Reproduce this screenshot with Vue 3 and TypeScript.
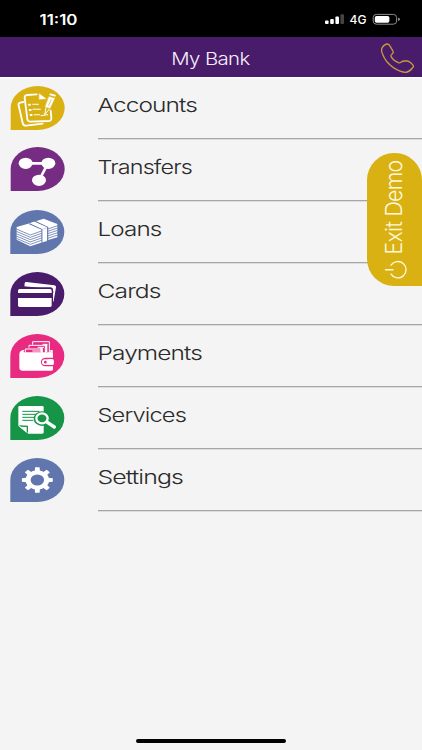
<script setup lang="ts">
interface MenuItem {
  label: string
  icon: string
  color: string
  width: number
}

const items: MenuItem[] = [
  { label: 'Accounts', icon: 'accounts', color: '#d9b112', width: 99.5 },
  { label: 'Transfers', icon: 'transfers', color: '#752c82', width: 94.5 },
  { label: 'Loans', icon: 'loans', color: '#6276ae', width: 64 },
  { label: 'Cards', icon: 'cards', color: '#481b6b', width: 63 },
  { label: 'Payments', icon: 'payments', color: '#e82a80', width: 104.5 },
  { label: 'Services', icon: 'services', color: '#169447', width: 88.5 },
  { label: 'Settings', icon: 'settings', color: '#6276ae', width: 85.5 },
]
const teeth = [0, 45, 90, 135, 180, 225, 270, 315]
</script>

<template>
  <div class="screen">
    <div class="status">
      <svg class="clock" width="44" height="16" viewBox="0 0 44 16">
        <text x="0.5" y="13.500" textLength="38" lengthAdjust="spacingAndGlyphs">11:10</text>
      </svg>
      <svg class="indicators" width="80" height="16" viewBox="0 0 80 16">
        <rect x="0" y="9.6" width="3.6" height="3.4" rx="1" fill="#fff" />
        <rect x="5.2" y="8" width="3.6" height="5" rx="1" fill="#fff" />
        <rect x="10.4" y="5.6" width="3.6" height="7.4" rx="1" fill="#fff" />
        <rect x="15.4" y="3.2" width="3.6" height="9.8" rx="1" fill="#444" />
        <text class="net" x="24.5" y="13" textLength="17" lengthAdjust="spacingAndGlyphs">4G</text>
        <rect x="48.2" y="3.4" width="23.4" height="9.8" rx="3.2" fill="none" stroke="#8c8c8c" stroke-width="1" />
        <rect x="49.8" y="4.9" width="14.6" height="6.8" rx="1.8" fill="#fff" />
        <path d="M73 6.5 Q75 7 75 8.3 Q75 9.6 73 10.1 Z" fill="#8c8c8c" />
      </svg>
    </div>

    <header class="bar">
      <svg class="title" width="82" height="24" viewBox="0 0 82 24">
        <text x="0.2" y="17.5" textLength="78.500" lengthAdjust="spacingAndGlyphs">My Bank</text>
      </svg>
      <svg class="phone" width="36" height="32" viewBox="0 0 108 96">
        <path d="M13 19 Q20 9 28 9 Q33 9 37 17 L44 29 Q48 35 43 38 Q37 43 39 46 Q45 58 61 65 Q65 67 70 63 Q73 60 79 60 H89 Q95 61 104 71 Q109 76 103 81 Q94 93 83 94 Q68 94 46 80 Q22 63 14 40 Q8 27 13 19 Z" />
      </svg>
    </header>

    <nav class="menu">
      <a v-for="item in items" :key="item.label" class="row">
        <svg class="icon" width="80" height="57" viewBox="0 0 240 171">
          <path v-if="item.icon === 'accounts' || item.icon === 'transfers'" d="M32 150V84A81 66 0 0 1 194 84A81 66 0 0 1 113 150Z" :fill="item.color" />
          <path v-else d="M31 153V87A81 66 0 0 1 193 87A81 66 0 0 1 112 153Z" :fill="item.color" />

          <g v-if="item.icon === 'accounts'" fill="none" stroke="#fff" stroke-width="5.500" stroke-linejoin="round" stroke-linecap="round">
            <path d="M70 66L61 68Q54 70 56 77L68 129Q70 138 79 137L128 131" />
            <path d="M110 43L82 45Q73 46 74 54L82 117Q83 125 91 125L146 123Q155 122 154 113L152 92" />
            <path d="M118 41L138 56L118 58Z" fill="#fff" stroke-width="1" />
            <path d="M98 73H115M99 88H121M103 104H119" stroke-width="3.2" />
            <path d="M87 74h3M89 90h3M92 105h3" stroke-width="6" />
            <path d="M147 50L164 55L150 85L136 80Z" fill="#fff" stroke-width="1" />
            <path d="M151 43L165 47" stroke-width="5" />
            <path d="M138 83L134 104L148 87" stroke-width="3" />
            <path d="M153 60L146 76" :stroke="item.color" stroke-width="2" />
            <path d="M123 107L143 104" stroke-width="3" />
          </g>
          <g v-else-if="item.icon === 'transfers'" fill="#fff">
            <path d="M77 67H144L117 118" fill="none" stroke="#fff" stroke-width="8" />
            <ellipse cx="77" cy="67" rx="21" ry="17" />
            <ellipse cx="145" cy="67" rx="21" ry="17" />
            <ellipse cx="117" cy="118" rx="21" ry="17" />
          </g>
          <g v-else-if="item.icon === 'loans'" fill="#fff">
            <path d="M50 72L92 60L132 76V116L91 130L50 110Z" />
            <path d="M92 59L131 47L172 63V103L132 115Z" />
            <g fill="none" :stroke="item.color" stroke-width="2.4">
              <path d="M49 78L91 96L127 83M49 85L91 103L127 90M49 92L91 110L127 97M49 99L91 117L127 104M49 106L91 124L127 111" />
              <path d="M143 78L173 68M143 85L173 75M143 92L173 82M143 99L173 89M143 106L173 96" />
              <path d="M88 62L126 79V119M105 55L143 73V114" stroke-width="3.5" />
            </g>
            <path d="M92 61L103 57L141 73V114L128 118V79Z" />
            <path d="M128 79L141 74" fill="none" :stroke="item.color" stroke-width="1" />
          </g>
          <g v-else-if="item.icon === 'cards'">
            <path d="M79 51L163 61Q169 62 168 67L161 108Q160 113 154 112L70 102L74 55Q75 50 79 51Z" fill="#fff" />
            <path d="M72 64L152 72L160 78V84L70 70Z" :fill="item.color" />
            <rect x="50" y="67" width="109" height="63" rx="8" :fill="item.color" />
            <rect x="54" y="72" width="101" height="54" rx="5" fill="#fff" />
            <rect x="53" y="84" width="103" height="15" :fill="item.color" />
          </g>
          <g v-else-if="item.icon === 'payments'">
            <g fill="none" stroke="#fff" stroke-width="3">
              <path d="M98 53V44H148V79M87 62V55H136V79M76 76V66H126V79" />
              <path d="M128 52H142M113 61H132M97 72H121" />
            </g>
            <path d="M121 61H128V76H121ZM136 52H142V76H136Z" fill="#fff" />
            <path d="M73 68Q59 69 58 80V123Q59 131 67 131H155Q159 131 159 127V80Q159 76 155 76H78Q68 76 72 71Z" fill="#fff" />
            <rect x="151" y="69" width="7" height="8" fill="#fff" />
            <path d="M165 92H136Q123 93 123 105Q123 117 136 118H165Z" :fill="item.color" />
            <rect x="126" y="97" width="35" height="17" rx="8" fill="#fff" />
            <rect x="144" y="97" width="17" height="17" rx="3" fill="#fff" />
            <circle cx="136" cy="105.500" r="4" :fill="item.color" />
          </g>
          <g v-else-if="item.icon === 'services'">
            <path d="M55 54Q55 51 59 51H127Q131 51 131 55V130Q131 134 127 134H85L55 110Z" fill="#fff" />
            <path d="M57 109L84 110V132Z" :fill="item.color" />
            <path d="M58 113L80 114V131Z" fill="#fff" />
            <path d="M67 67H118M67 76H111M67 85H102M67 94H100" stroke-width="3" :stroke="item.color" />
            <ellipse cx="126" cy="89" rx="25" ry="22" :fill="item.color" />
            <path d="M142 101L163 116" :stroke="item.color" stroke-width="19" stroke-linecap="round" />
            <path d="M142 100L163 114" stroke="#fff" stroke-width="10" stroke-linecap="round" />
            <ellipse cx="126" cy="88" rx="17" ry="15" fill="none" stroke="#fff" stroke-width="7" />
          </g>
          <g v-else>
            <g transform="translate(112 87) scale(1.22 1)" fill="#fff">
              <circle r="29" />
              <path v-for="a in teeth" :key="a" d="M-6.500 -25L-5.500 -38H5.500L6.500 -25Z" :transform="`rotate(${a})`" />
              <circle r="16.500" :fill="item.color" />
            </g>
          </g>
        </svg>
        <span class="cell">
          <svg width="120" height="30" viewBox="0 0 120 30">
            <text x="-0.500" y="23" :textLength="item.width" lengthAdjust="spacingAndGlyphs">{{ item.label }}</text>
          </svg>
        </span>
      </a>
    </nav>

    <button class="exit">
      <svg width="55" height="133" viewBox="0 0 55 133">
        <text transform="translate(35.200 101.500) rotate(-90)" textLength="94" lengthAdjust="spacingAndGlyphs">Exit Demo</text>
        <path d="M24 112.200A8.200 8.200 0 1 1 24 121.200M18.500 116.700H26" fill="none" stroke="#fff8dc" stroke-width="1.400" stroke-linecap="round" />
      </svg>
    </button>
    <div class="home"></div>
  </div>
</template>

<style>
body { margin: 0; background: #f4f4f4; }
</style>

<style scoped>
.screen {
  position: relative;
  box-sizing: border-box;
  width: 422px;
  height: 750px;
  overflow: hidden;
  display: flex;
  flex-direction: column;
  background: #f4f4f4;
  font-family: Inter, "Liberation Sans", sans-serif;
}
svg { display: block; flex: none; overflow: visible; }
.status {
  height: 37px;
  box-sizing: border-box;
  padding: 11px 17px 0 39px;
  display: flex;
  justify-content: space-between;
  background: #000;
}
.clock text { font-size: 14px; font-weight: 600; fill: #fff; }
.net { font-size: 11.500px; font-weight: 500; fill: #fff; }
.bar {
  height: 40px;
  display: grid;
  grid-template-columns: 1fr 82px 1fr;
  align-items: center;
  background: #481b6b;
  box-shadow: 0 1px 0 #fff;
}
.title { grid-column: 2; margin-top: 4px; margin-left: 1px; }
.title text { font-size: 17px; font-weight: 300; letter-spacing: -0.5px; fill: #f6f0fa; }
.phone { justify-self: end; margin-right: 8px; }
.phone path { fill: none; stroke: #c69a3d; stroke-width: 4; }
.menu { display: flex; flex-direction: column; }
.row { display: flex; height: 62px; }
.icon { margin-top: 2px; }
.row:first-child .icon { margin-top: 3px; }
.cell {
  flex: 1;
  box-sizing: border-box;
  margin-left: 18px;
  padding-top: 12px;
  border-bottom: 1px solid #a6a6a6;
  box-shadow: 0 1px 0 #dcdcdc;
}
.cell text { font-size: 19.300px; font-weight: 300; letter-spacing: -0.7px; fill: #2b2b2b; }
.exit {
  position: absolute;
  left: 367px;
  top: 153px;
  width: 55px;
  height: 133px;
  padding: 0;
  border: 0;
  border-radius: 27px 27px 0 27px;
  background: #d9b112;
  font-family: inherit;
}
.exit text { font-size: 23px; font-weight: 300; letter-spacing: -0.7px; fill: #fff8dc; }
.home {
  position: absolute;
  left: 136px;
  top: 739px;
  width: 150px;
  height: 4px;
  border-radius: 2px;
  background: #000;
}
</style>
